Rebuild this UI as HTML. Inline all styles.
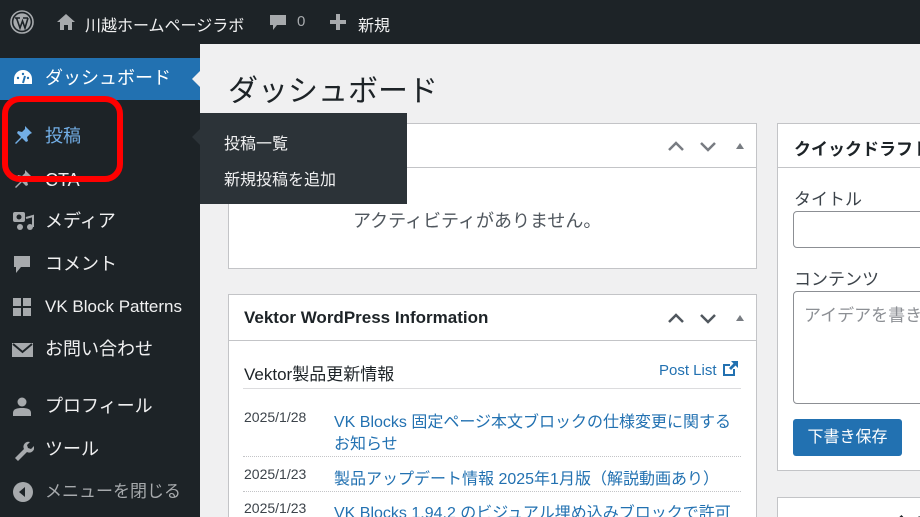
<!DOCTYPE html>
<html><head><meta charset="utf-8"><style>
*{box-sizing:border-box;margin:0;padding:0}
html{overflow:hidden;width:920px;height:517px}
body{width:920px;height:517px;overflow:hidden;background:#f0f0f1;font-family:"Liberation Sans","Noto Sans CJK JP",sans-serif;position:relative;color:#1d2327}
.abs{position:absolute}
#bar{left:0;top:0;width:920px;height:44px;background:#1d2327;color:#f0f0f1;font-size:16px}
#side{left:0;top:44px;width:200px;height:473px;background:#1d2327}
.mi{position:absolute;left:45px;color:#f0f0f1;font-size:18px;line-height:24px;white-space:nowrap}
.box{position:absolute;background:#fff;border:1px solid #c3c4c7;overflow:hidden}
.hd{position:absolute;left:0;right:0;top:0;height:44px;border-bottom:1px solid #c3c4c7}
.lk{color:#2271b1}
.dt{position:absolute;left:15px;font-size:14px;color:#3c434a}
.ln{position:absolute;left:105px;font-size:16px;color:#2271b1;white-space:nowrap}
.dot{position:absolute;left:14px;width:498px;border-top:1px dotted #c3c4c7}
</style></head><body>
<div id="bar" class="abs">
 <svg class="abs" style="left:10px;top:10px" width="24" height="24" viewBox="0 0 24 24"><circle cx="12" cy="12" r="11" fill="none" stroke="#a7aaad" stroke-width="1.6"/><circle cx="12" cy="12" r="8.6" fill="#a7aaad"/><path d="M5 8h5M6.5 8l3.5 10 2.5-7 2.5 7 3-10M13 8h5" stroke="#1d2327" stroke-width="1.6" fill="none"/></svg>
 <svg class="abs" style="left:56px;top:13px" width="20" height="18" viewBox="0 0 20 18"><path d="M10 1L1 9h3v8h4v-5h4v5h4V9h3z" fill="#a7aaad"/></svg>
 <div class="abs" style="left:85px;top:12px;font-size:16px">川越ホームページラボ</div>
 <svg class="abs" style="left:268px;top:13px" width="20" height="20" viewBox="0 0 20 20"><path d="M2 2h16v10H9l-4 5v-5H2z" fill="#a7aaad"/></svg>
 <div class="abs" style="left:297px;top:13px;color:#a7aaad;font-size:15px">0</div>
 <svg class="abs" style="left:330px;top:14px" width="16" height="16" viewBox="0 0 16 16"><path d="M6 0h4v6h6v4h-6v6H6v-6H0V6h6z" fill="#a7aaad"/></svg>
 <div class="abs" style="left:358px;top:12px">新規</div>
</div>
<div id="side" class="abs"></div>
<div class="abs" style="left:0;top:58px;width:200px;height:42px;background:#2271b1"></div>
<svg class="abs" style="left:12px;top:67px" width="22" height="22" viewBox="0 0 22 22"><path d="M11 3a9 9 0 0 0-9 9v5h18v-5a9 9 0 0 0-9-9z" fill="#fff"/><path d="M11 16l2-7" stroke="#2271b1" stroke-width="2"/><circle cx="6" cy="11" r="1.2" fill="#2271b1"/><circle cx="16" cy="11" r="1.2" fill="#2271b1"/><circle cx="11" cy="7" r="1.2" fill="#2271b1"/></svg>
<div class="mi" style="top:66px;color:#fff">ダッシュボード</div>
<div class="abs" style="left:192px;top:71px;border-right:8px solid #f0f0f1;border-top:8px solid transparent;border-bottom:8px solid transparent"></div>
<svg class="abs" style="left:12px;top:124px" width="22" height="22" viewBox="0 0 22 22"><path d="M13 2l7 7-2 1-3 3 1 4-2 1-4-4-6 6-1-1 6-6-4-4 1-2 4 1 3-3z" fill="#72aee6"/></svg>
<div class="mi" style="top:124px;color:#72aee6">投稿</div>
<svg class="abs" style="left:12px;top:168px" width="22" height="22" viewBox="0 0 22 22"><path d="M13 2l7 7-2 1-3 3 1 4-2 1-4-4-6 6-1-1 6-6-4-4 1-2 4 1 3-3z" fill="#a7aaad"/></svg>
<div class="mi" style="top:168px">CTA</div>
<svg class="abs" style="left:12px;top:210px" width="22" height="22" viewBox="0 0 22 22"><rect x="1" y="2" width="12" height="10" rx="2" fill="#a7aaad"/><circle cx="7" cy="7" r="2.5" fill="#1d2327"/><path d="M14 8l7-2v11" stroke="#a7aaad" stroke-width="2" fill="none"/><circle cx="18" cy="17" r="3" fill="#a7aaad"/><circle cx="8" cy="17" r="3" fill="#a7aaad"/></svg>
<div class="mi" style="top:209px">メディア</div>
<svg class="abs" style="left:12px;top:254px" width="22" height="22" viewBox="0 0 22 22"><path d="M2 2h16v11h-9l-5 6v-6H2z" fill="#a7aaad"/></svg>
<div class="mi" style="top:252px">コメント</div>
<svg class="abs" style="left:12px;top:297px" width="22" height="22" viewBox="0 0 22 22"><rect x="1" y="1" width="8" height="8" fill="#a7aaad"/><rect x="11" y="1" width="8" height="8" fill="#a7aaad"/><rect x="1" y="11" width="8" height="8" fill="#a7aaad"/><rect x="11" y="11" width="8" height="8" fill="#a7aaad"/></svg>
<div class="mi" style="top:295px;font-size:17px">VK Block Patterns</div>
<svg class="abs" style="left:12px;top:340px" width="22" height="22" viewBox="0 0 22 22"><rect x="0" y="3" width="21" height="14" fill="#a7aaad"/><path d="M1 4l9.5 8L20 4" stroke="#1d2327" stroke-width="2" fill="none"/></svg>
<div class="mi" style="top:337px">お問い合わせ</div>
<svg class="abs" style="left:12px;top:396px" width="22" height="22" viewBox="0 0 22 22"><circle cx="10" cy="6" r="4.5" fill="#a7aaad"/><path d="M1 20v-3c0-4 4-5 9-5s9 1 9 5v3z" fill="#a7aaad"/></svg>
<div class="mi" style="top:394px">プロフィール</div>
<svg class="abs" style="left:12px;top:439px" width="22" height="22" viewBox="0 0 22 22"><path d="M3 19l9-9a5 5 0 0 1 6-7l-3 3 1 3 3 1 3-3a5 5 0 0 1-7 6l-9 9z" fill="#a7aaad"/></svg>
<div class="mi" style="top:437px">ツール</div>
<svg class="abs" style="left:12px;top:481px" width="22" height="22" viewBox="0 0 22 22"><circle cx="11" cy="11" r="10" fill="#a7aaad"/><path d="M13 6l-6 5 6 5z" fill="#1d2327"/></svg>
<div class="mi" style="top:480px;color:#a7aaad;font-size:17px">メニューを閉じる</div>
<div class="abs" style="left:2px;top:96px;width:121px;height:86px;border:6px solid #f00;border-radius:18px"></div>
<div class="abs" style="left:192px;top:129px;border-right:8px solid #2c3338;border-top:8px solid transparent;border-bottom:8px solid transparent"></div>
<div class="abs" style="left:228px;top:66px;font-size:30px;color:#1d2327">ダッシュボード</div>
<div class="box" style="left:228px;top:123px;width:529px;height:146px">
 <div class="hd"></div>
 <svg class="abs" style="left:438px;top:14px" width="80" height="16" viewBox="0 0 80 16"><path d="M2 12l7-7 7 7" stroke="#787c82" stroke-width="2.5" fill="none"/><path d="M34 5l7 7 7-7" stroke="#787c82" stroke-width="2.5" fill="none"/><path d="M69 11l4-6 4 6z" fill="#787c82"/></svg>
 <div class="abs" style="left:124px;top:83px;font-size:18px;color:#50575e">アクティビティがありません。</div>
</div>
<div class="abs" style="left:200px;top:113px;width:207px;height:91px;background:#2c3338"></div>
<div class="abs" style="left:224px;top:130px;color:#f0f0f1;font-size:16px">投稿一覧</div>
<div class="abs" style="left:224px;top:166px;color:#f0f0f1;font-size:16px">新規投稿を追加</div>
<div class="box" style="left:228px;top:294px;width:529px;height:240px">
 <div class="hd" style="height:46px"></div>
 <div class="abs" style="left:15px;top:13px;font-size:17px;font-weight:bold">Vektor WordPress Information</div>
 <svg class="abs" style="left:438px;top:15px" width="80" height="16" viewBox="0 0 80 16"><path d="M2 12l7-7 7 7" stroke="#50575e" stroke-width="2.5" fill="none"/><path d="M34 5l7 7 7-7" stroke="#50575e" stroke-width="2.5" fill="none"/><path d="M69 11l4-6 4 6z" fill="#787c82"/></svg>
 <div class="abs" style="left:15px;top:65px;font-size:17px">Vektor製品更新情報</div>
 <div class="abs lk" style="left:430px;top:67px;font-size:15px">Post List</div>
 <svg class="abs" style="left:492px;top:65px" width="18" height="18" viewBox="0 0 18 18"><path d="M2 4h7v2H4v8h8V9h2v7H2z" fill="#2271b1"/><path d="M10 1h7v7l-2.5-2.5L10 10 8 8l4.5-4.5z" fill="#2271b1"/></svg>
 <div class="abs" style="left:14px;top:93px;width:498px;border-top:1px solid #dcdcde"></div>
 <div class="dt" style="top:114px">2025/1/28</div>
 <div class="ln" style="top:113px">VK Blocks 固定ページ本文ブロックの仕様変更に関する</div>
 <div class="ln" style="top:135px">お知らせ</div>
 <div class="dot" style="top:161px"></div>
 <div class="dt" style="top:171px">2025/1/23</div>
 <div class="ln" style="top:170px">製品アップデート情報 2025年1月版（解説動画あり）</div>
 <div class="dot" style="top:196px"></div>
 <div class="dt" style="top:205px">2025/1/23</div>
 <div class="ln" style="top:204px">VK Blocks 1.94.2 のビジュアル埋め込みブロックで許可</div>
</div>
<div class="box" style="left:777px;top:123px;width:143px;height:348px;border-right:none">
 <div class="hd"></div>
 <div class="abs" style="left:16px;top:11px;font-size:17px;font-weight:bold;white-space:nowrap">クイックドラフト</div>
 <div class="abs" style="left:16px;top:61px;font-size:17px;color:#3c434a">タイトル</div>
 <div class="abs" style="left:15px;top:87px;width:160px;height:37px;border:1px solid #8c8f94;border-radius:4px"></div>
 <div class="abs" style="left:16px;top:141px;font-size:17px;color:#3c434a">コンテンツ</div>
 <div class="abs" style="left:15px;top:167px;width:160px;height:113px;border:1px solid #8c8f94;border-radius:4px"></div>
 <div class="abs" style="left:26px;top:177px;font-size:17px;color:#8c8f94;white-space:nowrap">アイデアを書き留めて</div>
 <div class="abs" style="left:15px;top:295px;width:109px;height:37px;background:#2271b1;border-radius:3px;color:#fff;font-size:16px;line-height:37px;text-align:center">下書き保存</div>
</div>
<div class="box" style="left:777px;top:497px;width:143px;height:20px;border-right:none;border-bottom:none">
 <div class="abs" style="left:16px;top:11px;font-size:17px;font-weight:bold;white-space:nowrap">WordPress イベント</div>
</div>
</body></html>
